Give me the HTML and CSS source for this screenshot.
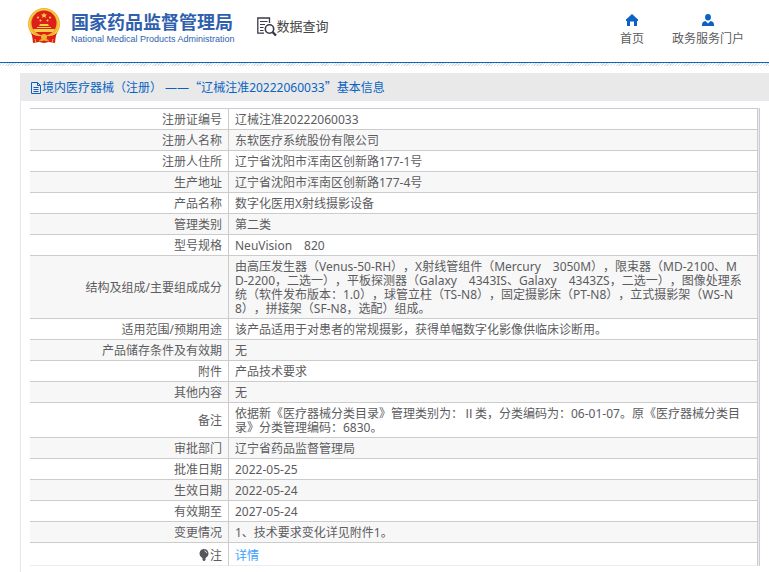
FILE: index.html
```html
<!DOCTYPE html>
<html lang="zh-CN">
<head>
<meta charset="utf-8">
<meta name="viewport" content="width=device-width, initial-scale=1">
<title>数据查询</title>
<link rel="stylesheet" href="styles.css">
</head>
<body>
<header class="site-header">
  <a class="brand" href="#">
    <svg class="emblem" viewBox="0 0 34 36" aria-hidden="true">
      <path d="M5 26 L6 35 L12 34 L17 35 L22 34 L28 35 L29 26Z" fill="#d9201a"/>
      <circle cx="17" cy="16" r="16" fill="#f0b52c"/>
      <circle cx="17" cy="16" r="14.6" fill="none" stroke="#f9d45c" stroke-width="1"/>
      <circle cx="17" cy="15" r="12.5" fill="#dc1f18"/>
      <path d="M17 4.5l.9 2h2.2l-1.7 1.4.7 2.2-2.1-1.3-2.1 1.3.7-2.2-1.7-1.4h2.2z" fill="#fbd448"/>
      <g fill="#fbd448"><circle cx="11" cy="9.500" r="1"/><circle cx="23" cy="9.500" r="1"/><circle cx="13.500" cy="12.500" r="1"/><circle cx="20.500" cy="12.500" r="1"/></g>
      <path d="M13 16h8l1 2H12zM10 19h14v1H10zM6 21h22l-2 3H8z" fill="#f8cd49"/>
      <path d="M4 25q6 4 10 3l3-2 3 2q4 1 10-3l-2 5q-5 3-8 1h-6q-3 2-8-1z" fill="#dc1f18"/>
      <circle cx="17" cy="29" r="3" fill="#f0b52c"/>
      <path d="M8 31l1 4M26 31l-1 4M12 33q5-2 10 0" fill="none" stroke="#f0b52c" stroke-width="1"/>
    </svg>
    <span class="brand-text">
      <span class="brand-name">国家药品监督管理局</span>
      <span class="brand-sub">National Medical Products Administration</span>
    </span>
  </a>
  <div class="section-name">
    <svg class="query-icon" viewBox="0 0 20 20" fill="none" stroke="#3b384a" aria-hidden="true">
      <path d="M12.500 6V1H.8v15.200H7" stroke-width="1.300"/>
      <path d="M3 4.500h7.500M3 7.500h5M3 10.500h3.500M3 13.500h3.500" stroke-width="1.100"/>
      <circle cx="12.500" cy="12" r="4.200" stroke-width="1.600"/>
      <path d="M15.500 15l3.500 3.500" stroke-width="2.400"/>
    </svg>
    <span>数据查询</span>
  </div>
  <nav class="site-nav">
    <a href="#">
      <svg viewBox="0 0 12 12" aria-hidden="true"><path d="M6 0L0 5.500V7h1v5h3V7.500h4V12h3V7h1V5.500z" fill="#0a63c2"/></svg>
      <span>首页</span>
    </a>
    <a href="#">
      <svg viewBox="0 0 12 12" aria-hidden="true"><ellipse cx="6" cy="3.200" rx="2.900" ry="3.200" fill="#0a63c2"/><path d="M0 12V10.500Q0 7.800 3.500 7L6 9.500 8.500 7Q12 7.800 12 10.500V12z" fill="#0a63c2"/></svg>
      <span>政务服务门户</span>
    </a>
  </nav>
</header>
<div class="hatch"></div>
<main class="panel">
  <h1 class="panel-title">
    <svg viewBox="0 0 12 12" fill="none" stroke="#0a63c2" aria-hidden="true"><path d="M1.500.5h6l3 3v8h-9zM7.500.5v3h3M3.500 5.500h5M3.500 7.500h5M3.500 9.500h5"/></svg>
    <span>境内医疗器械（注册） ——<span class="wide">“</span>辽械注准20222060033<span class="wide">”</span>基本信息</span>
  </h1>
  <div class="table-frame">
    <table class="detail">
      <tbody>
        <tr><th scope="row">注册证编号</th><td>辽械注准20222060033</td></tr>
        <tr><th scope="row">注册人名称</th><td>东软医疗系统股份有限公司</td></tr>
        <tr><th scope="row">注册人住所</th><td>辽宁省沈阳市浑南区创新路177-1号</td></tr>
        <tr><th scope="row">生产地址</th><td>辽宁省沈阳市浑南区创新路177-4号</td></tr>
        <tr><th scope="row">产品名称</th><td>数字化医用X射线摄影设备</td></tr>
        <tr><th scope="row">管理类别</th><td>第二类</td></tr>
        <tr><th scope="row">型号规格</th><td>NeuVision　820</td></tr>
        <tr><th scope="row">结构及组成/主要组成成分</th><td>由高压发生器（Venus-50-RH），X射线管组件（Mercury　3050M），限束器（MD-2100、M<br>D-2200，二选一），平板探测器（Galaxy　4343IS、Galaxy　4343ZS，二选一），图像处理系<br>统（软件发布版本：1.0），球管立柱（TS-N8），固定摄影床（PT-N8），立式摄影架（WS-N<br>8），拼接架（SF-N8，选配）组成。</td></tr>
        <tr><th scope="row">适用范围/预期用途</th><td>该产品适用于对患者的常规摄影，获得单幅数字化影像供临床诊断用。</td></tr>
        <tr><th scope="row">产品储存条件及有效期</th><td>无</td></tr>
        <tr><th scope="row">附件</th><td>产品技术要求</td></tr>
        <tr><th scope="row">其他内容</th><td>无</td></tr>
        <tr><th scope="row">备注</th><td>依据新《医疗器械分类目录》管理类别为：Ⅱ类，分类编码为：06-01-07。原《医疗器械分类目<br>录》分类管理编码：6830。</td></tr>
        <tr><th scope="row">审批部门</th><td>辽宁省药品监督管理局</td></tr>
        <tr><th scope="row">批准日期</th><td>2022-05-25</td></tr>
        <tr><th scope="row">生效日期</th><td>2022-05-24</td></tr>
        <tr><th scope="row">有效期至</th><td>2027-05-24</td></tr>
        <tr><th scope="row">变更情况</th><td>1、技术要求变化详见附件1。</td></tr>
        <tr class="note"><th scope="row"><svg class="bulb" viewBox="0 0 10 12" aria-hidden="true"><path d="M5 0a4.500 4.500 0 0 1 2.500 8.200L6.500 9h-3l-1-.8A4.500 4.500 0 0 1 5 0z" fill="#55555b"/><path d="M3.500 9h3v2l-1 1h-1l-1-1z" fill="#55555b"/><path d="M5.500 1.800q2 .4 2.200 2.400" fill="none" stroke="#ddd"/></svg>注</th><td><a href="#">详情</a></td></tr>
      </tbody>
    </table>
  </div>
</main>
</body>
</html>
```
FILE: styles.css
```css
* {
  box-sizing: border-box;
}

body {
  display: flex;
  flex-direction: column;
  min-height: 100vh;
  margin: 0;
  background: #fff;
  color: #5c5c60;
  font: 12px/14px "Noto Sans", "Noto Sans CJK SC", sans-serif;
  text-spacing-trim: space-all;
}

a {
  text-decoration: none;
}

.site-header {
  display: flex;
  align-items: flex-start;
  height: 63px;
  padding: 8px 25px 0 27px;
  border-bottom: 1px solid #0a63c2;
}

.brand {
  display: flex;
  gap: 10px;
}

.emblem {
  width: 34px;
  height: 36px;
}

.brand-text {
  display: flex;
  flex-direction: column;
  padding-top: 2px;
  color: #2f5fae;
  white-space: nowrap;
}

.brand-name {
  font: bold 18px/22px "Noto Sans CJK SC", sans-serif;
}

.brand-sub {
  font: 9px/14px "Liberation Sans", sans-serif;
}

.section-name {
  display: flex;
  align-items: center;
  margin: 6px 0 0 22px;
  color: #444;
  font: 13px/20px "Noto Sans CJK SC", sans-serif;
  white-space: nowrap;
}

.query-icon {
  width: 20px;
  height: 20px;
  margin-top: 3px;
}

.site-nav {
  display: flex;
  gap: 28px;
  margin-left: auto;
  padding-top: 6px;
}

.site-nav a {
  display: flex;
  flex-direction: column;
  align-items: center;
  gap: 5px;
  color: #5c5c60;
  line-height: 16px;
}

.site-nav svg {
  width: 12px;
  height: 12px;
}

.hatch {
  height: 3px;
  background: repeating-linear-gradient(135deg, #fff 0 1px, #dedede 1px 2px);
}

.panel {
  flex: 1;
  margin: 7px 0 0 20px;
  border-left: 1px solid #e6e6ee;
}

.panel-title {
  display: flex;
  align-items: center;
  height: 28px;
  margin: 0 0 7px -1px;
  padding: 2px 0 0 10px;
  border-bottom: 1px solid #e6e6f2;
  background: #e9e9e9;
  color: #0a63c2;
  font-size: 12px;
  font-weight: normal;
  white-space: nowrap;
}

.panel-title svg {
  width: 12px;
  height: 12px;
}

.panel-title .wide {
  font-family: "Noto Sans CJK SC", sans-serif;
}

.table-frame {
  margin: 0 9px 0 9px;
  padding-right: 1px;
  border-right: 1px solid #ccccd4;
  background: #ececf4;
}

.detail {
  width: 100%;
  border-collapse: separate;
  border-spacing: 0;
  table-layout: fixed;
  background: #fff;
}

.detail th,
.detail td {
  padding: 4px 6px 2px;
  border-top: 1px solid #ccc;
  border-right: 1px solid #ccc;
  font-weight: normal;
  vertical-align: middle;
}

.detail th {
  width: 199px;
  text-align: right;
}

.detail td {
  white-space: nowrap;
}

.detail tr:nth-child(even) {
  background: #f7f7f7;
}

.detail .note th,
.detail .note td {
  padding-top: 6px;
  border-bottom: 1px solid #ececf0;
}

.detail .note a {
  color: #409eff;
}

.bulb {
  width: 10px;
  height: 12px;
  margin-right: 1px;
  vertical-align: -1px;
}
```
